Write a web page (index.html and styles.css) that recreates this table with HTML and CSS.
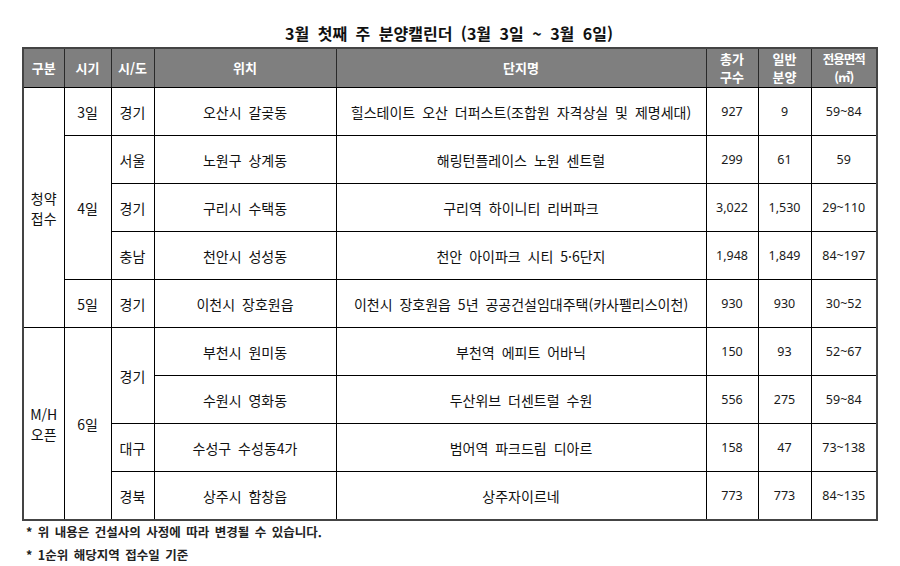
FILE: index.html
```html
<!DOCTYPE html>
<html lang="ko">
<head>
<meta charset="utf-8">
<link rel="stylesheet" href="styles.css">
</head>
<body>
<div class="page">
  <h1 class="title">3월 첫째 주 분양캘린더 (3월 3일 ~ 3월 6일)</h1>
  <table class="cal">
    <colgroup>
      <col class="c1"><col class="c2"><col class="c3"><col class="c4">
      <col class="c5"><col class="c6"><col class="c7"><col class="c8">
    </colgroup>
    <thead>
      <tr>
        <th>구분</th><th>시기</th><th>시/도</th><th>위치</th><th>단지명</th>
        <th>총가<br>구수</th><th>일반<br>분양</th><th class="narrow">전용면적<br>(㎡)</th>
      </tr>
    </thead>
    <tbody>
      <tr>
        <td rowspan="5" class="grp">청약<br>접수</td>
        <td>3일</td><td>경기</td><td>오산시 갈곶동</td>
        <td class="name">힐스테이트 오산 더퍼스트(조합원 자격상실 및 제명세대)</td>
        <td class="num">927</td><td class="num">9</td><td class="num">59~84</td>
      </tr>
      <tr>
        <td rowspan="3">4일</td><td>서울</td><td>노원구 상계동</td>
        <td class="name">해링턴플레이스 노원 센트럴</td>
        <td class="num">299</td><td class="num">61</td><td class="num">59</td>
      </tr>
      <tr>
        <td>경기</td><td>구리시 수택동</td>
        <td class="name">구리역 하이니티 리버파크</td>
        <td class="num">3,022</td><td class="num">1,530</td><td class="num">29~110</td>
      </tr>
      <tr>
        <td>충남</td><td>천안시 성성동</td>
        <td class="name">천안 아이파크 시티 5·6단지</td>
        <td class="num">1,948</td><td class="num">1,849</td><td class="num">84~197</td>
      </tr>
      <tr>
        <td>5일</td><td>경기</td><td>이천시 장호원읍</td>
        <td class="name">이천시 장호원읍 5년 공공건설임대주택(카사펠리스이천)</td>
        <td class="num">930</td><td class="num">930</td><td class="num">30~52</td>
      </tr>
      <tr>
        <td rowspan="4" class="grp">M/H<br>오픈</td>
        <td rowspan="4">6일</td><td rowspan="2">경기</td><td>부천시 원미동</td>
        <td class="name">부천역 에피트 어바닉</td>
        <td class="num">150</td><td class="num">93</td><td class="num">52~67</td>
      </tr>
      <tr>
        <td>수원시 영화동</td>
        <td class="name">두산위브 더센트럴 수원</td>
        <td class="num">556</td><td class="num">275</td><td class="num">59~84</td>
      </tr>
      <tr>
        <td>대구</td><td>수성구 수성동4가</td>
        <td class="name">범어역 파크드림 디아르</td>
        <td class="num">158</td><td class="num">47</td><td class="num">73~138</td>
      </tr>
      <tr>
        <td>경북</td><td>상주시 함창읍</td>
        <td class="name">상주자이르네</td>
        <td class="num">773</td><td class="num">773</td><td class="num">84~135</td>
      </tr>
    </tbody>
  </table>
  <p class="note">* 위 내용은 건설사의 사정에 따라 변경될 수 있습니다.</p>
  <p class="note">* 1순위 해당지역 접수일 기준</p>
</div>
</body>
</html>
```

FILE: styles.css
```css
html, body {
  margin: 0;
  padding: 0;
  background: #ffffff;
}

body {
  font-family: "Noto Sans CJK KR", "Noto Sans", sans-serif;
  color: #111111;
}

.page {
  width: 854px;
  padding: 23px 0 0 22px;
}

.title {
  margin: 0 0 4px 0;
  font-size: 16px;
  line-height: 20px;
  font-weight: 700;
  word-spacing: 4px;
  text-align: center;
  color: #111111;
}

.cal {
  width: 854px;
  table-layout: fixed;
  border-collapse: collapse;
  border: 2px solid #444444;
}

.c1 { width: 41px; }
.c2 { width: 47px; }
.c3 { width: 43px; }
.c4 { width: 182px; }
.c5 { width: 370px; }
.c6 { width: 52px; }
.c7 { width: 53px; }
.c8 { width: 66px; }

.cal th {
  height: 38px;
  padding: 0;
  background: #7f7f7f;
  color: #ffffff;
  font-size: 13px;
  line-height: 18px;
  font-weight: 700;
  text-align: center;
  vertical-align: middle;
  border: 1px solid #2a2a2a;
  border-bottom: 1px solid #000000;
}

.cal th.narrow {
  font-size: 12.5px;
  letter-spacing: -1px;
}

.cal td {
  height: 47px;
  padding: 0;
  font-size: 14px;
  line-height: 18px;
  text-align: center;
  vertical-align: middle;
  border: 1px solid #000000;
  white-space: nowrap;
  word-spacing: 3px;
}

.cal td.grp {
  line-height: 20px;
}

.cal td.num {
  font-family: "Noto Sans", sans-serif;
  font-size: 12.5px;
  word-spacing: 0;
  color: #1a1a1a;
}

.note {
  margin: 2px 0 0 4px;
  font-size: 12.5px;
  line-height: 18px;
  font-weight: 700;
  word-spacing: 2px;
  color: #222222;
}

.note + .note {
  margin-top: 5px;
}
```
